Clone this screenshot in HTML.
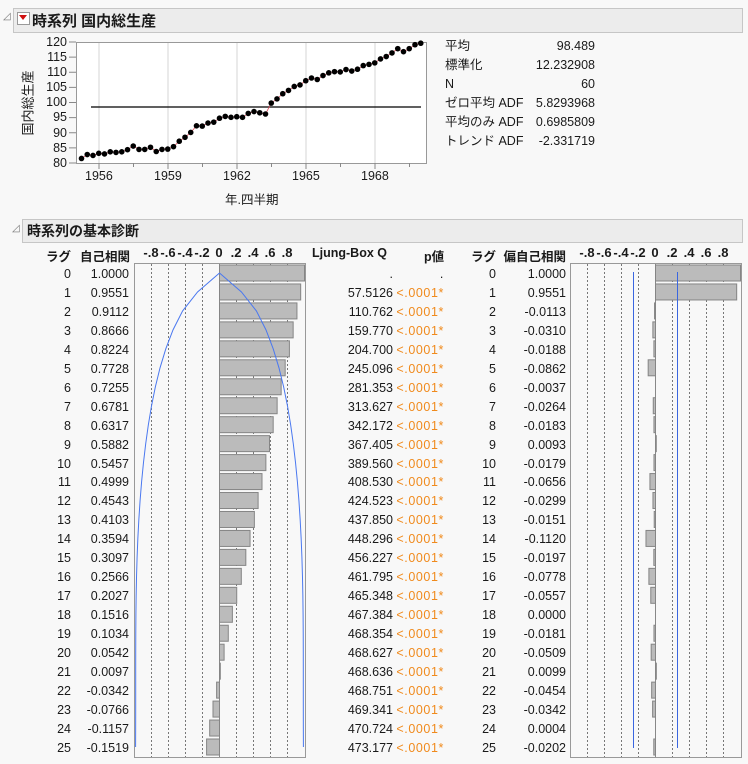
<!DOCTYPE html>
<html><head><meta charset="utf-8">
<style>
body{margin:0;width:748px;height:764px;background:#f8f8f8;font-family:"Liberation Sans","Noto Sans CJK JP",sans-serif;font-size:12.5px;color:#1a1a1a;position:relative;overflow:hidden}
.a{position:absolute;white-space:nowrap}
.r{text-align:right}
.hdr{position:absolute;background:#ececec;border:1px solid #c6c6c6;box-sizing:border-box}
.b{font-weight:bold}
.o{color:#f08a1c}
.yl{position:absolute;left:30px;width:37px;text-align:right;font-size:12.5px}
.t{position:absolute;top:245px;font-weight:bold;font-size:13px;transform:translateX(-50%)}
</style></head><body>
<div class="a" style="left:3px;top:11px;font-size:10px;color:#777">◿</div>
<div class="hdr" style="left:13px;top:8px;width:730px;height:25px"></div>
<div class="a" style="left:17px;top:12px;width:11px;height:11px;border:1px solid #999;background:#fff"></div>
<div class="a" style="left:19px;top:15px;width:0;height:0;border-left:4px solid transparent;border-right:4px solid transparent;border-top:5px solid #d01010"></div>
<div class="a b" style="left:32px;top:10px;font-size:15px">時系列 国内総生産</div>

<svg class="a" style="left:0;top:0" width="748" height="764" id="s">
<rect x="76.5" y="42.5" width="350" height="121" fill="#fff" stroke="#999"/>
</svg>

<div class="yl" style="top:35px">120</div>
<div class="yl" style="top:50px">115</div>
<div class="yl" style="top:65px">110</div>
<div class="yl" style="top:80px">105</div>
<div class="yl" style="top:95px">100</div>
<div class="yl" style="top:110px">95</div>
<div class="yl" style="top:126px">90</div>
<div class="yl" style="top:141px">85</div>
<div class="yl" style="top:156px">80</div>
<div class="a" style="top:103px;transform:translate(-50%,-50%) rotate(-90deg);left:27px;font-size:13px">国内総生産</div>
<div class="a" style="left:85px;top:169px">1956</div>
<div class="a" style="left:154px;top:169px">1959</div>
<div class="a" style="left:223px;top:169px">1962</div>
<div class="a" style="left:292px;top:169px">1965</div>
<div class="a" style="left:361px;top:169px">1968</div>
<div class="a" style="left:225px;top:189px">年.四半期</div>

<div class="a" style="left:445px;top:37px;line-height:19px">平均<br>標準化<br>N<br>ゼロ平均 ADF<br>平均のみ ADF<br>トレンド ADF</div>
<div class="a r" style="left:515px;top:37px;width:80px;line-height:19px">98.489<br>12.232908<br>60<br>5.8293968<br>0.6985809<br>-2.331719</div>

<div class="a" style="left:12px;top:223px;font-size:10px;color:#777">◿</div>
<div class="hdr" style="left:22px;top:219px;width:721px;height:24px"></div>
<div class="a b" style="left:27px;top:221px;font-size:14px">時系列の基本診断</div>

<div class="a b" style="left:0;top:246px;width:71px;text-align:right">ラグ</div>
<div class="a b" style="left:60px;top:246px;width:70px;text-align:right">自己相関</div>
<div class="t" style="left:151px">-.8</div><div class="t" style="left:168px">-.6</div><div class="t" style="left:185px">-.4</div><div class="t" style="left:202px">-.2</div><div class="t" style="left:219px">0</div><div class="t" style="left:236px">.2</div><div class="t" style="left:253px">.4</div><div class="t" style="left:270px">.6</div><div class="t" style="left:287px">.8</div>
<div class="a b" style="left:312px;top:246px">Ljung-Box Q</div>
<div class="a b" style="left:424px;top:246px">p値</div>
<div class="a b" style="left:465px;top:246px;width:31px;text-align:right">ラグ</div>
<div class="a b" style="left:496px;top:246px;width:70px;text-align:right">偏自己相関</div>
<div class="t" style="left:587px">-.8</div><div class="t" style="left:604px">-.6</div><div class="t" style="left:621px">-.4</div><div class="t" style="left:638px">-.2</div><div class="t" style="left:655px">0</div><div class="t" style="left:672px">.2</div><div class="t" style="left:689px">.4</div><div class="t" style="left:706px">.6</div><div class="t" style="left:723px">.8</div>

<div class="a r" style="left:30px;top:265px;width:41px;line-height:18.96px">0<br>1<br>2<br>3<br>4<br>5<br>6<br>7<br>8<br>9<br>10<br>11<br>12<br>13<br>14<br>15<br>16<br>17<br>18<br>19<br>20<br>21<br>22<br>23<br>24<br>25</div>
<div class="a r" style="left:70px;top:265px;width:59px;line-height:18.96px">1.0000<br>0.9551<br>0.9112<br>0.8666<br>0.8224<br>0.7728<br>0.7255<br>0.6781<br>0.6317<br>0.5882<br>0.5457<br>0.4999<br>0.4543<br>0.4103<br>0.3594<br>0.3097<br>0.2566<br>0.2027<br>0.1516<br>0.1034<br>0.0542<br>0.0097<br>-0.0342<br>-0.0766<br>-0.1157<br>-0.1519</div>
<div class="a r" style="left:315px;top:265px;width:78px;line-height:18.96px">.<br>57.5126<br>110.762<br>159.770<br>204.700<br>245.096<br>281.353<br>313.627<br>342.172<br>367.405<br>389.560<br>408.530<br>424.523<br>437.850<br>448.296<br>456.227<br>461.795<br>465.348<br>467.384<br>468.354<br>468.627<br>468.636<br>468.751<br>469.341<br>470.724<br>473.177</div>
<div class="a o r" style="left:380px;top:265px;width:64px;line-height:18.96px;letter-spacing:0.6px"><span style="color:#1a1a1a">.</span><br>&lt;.0001*<br>&lt;.0001*<br>&lt;.0001*<br>&lt;.0001*<br>&lt;.0001*<br>&lt;.0001*<br>&lt;.0001*<br>&lt;.0001*<br>&lt;.0001*<br>&lt;.0001*<br>&lt;.0001*<br>&lt;.0001*<br>&lt;.0001*<br>&lt;.0001*<br>&lt;.0001*<br>&lt;.0001*<br>&lt;.0001*<br>&lt;.0001*<br>&lt;.0001*<br>&lt;.0001*<br>&lt;.0001*<br>&lt;.0001*<br>&lt;.0001*<br>&lt;.0001*<br>&lt;.0001*</div>
<div class="a r" style="left:455px;top:265px;width:41px;line-height:18.96px">0<br>1<br>2<br>3<br>4<br>5<br>6<br>7<br>8<br>9<br>10<br>11<br>12<br>13<br>14<br>15<br>16<br>17<br>18<br>19<br>20<br>21<br>22<br>23<br>24<br>25</div>
<div class="a r" style="left:500px;top:265px;width:66px;line-height:18.96px">1.0000<br>0.9551<br>-0.0113<br>-0.0310<br>-0.0188<br>-0.0862<br>-0.0037<br>-0.0264<br>-0.0183<br>0.0093<br>-0.0179<br>-0.0656<br>-0.0299<br>-0.0151<br>-0.1120<br>-0.0197<br>-0.0778<br>-0.0557<br>0.0000<br>-0.0181<br>-0.0509<br>0.0099<br>-0.0454<br>-0.0342<br>0.0004<br>-0.0202</div>

<script>
var s=document.getElementById('s'),h='';
var d=[81.5,82.8,82.5,83.2,83,83.7,83.5,83.7,84.4,85.6,84.5,84.5,85.2,83.8,84.5,84.6,85.4,87.2,88.5,90.1,92.3,92.2,93.2,93.5,94.8,95.4,95.1,95.3,95.1,96.4,97,96.6,96.2,99.8,101.2,102.9,104,105.3,105.8,107.2,108.1,107.6,108.9,109.8,110.2,110.1,110.9,110.4,111,112.2,112.6,113.1,114.4,115.2,116.4,117.8,116.8,117.8,119.1,119.6];
function Y(v){return 163-(v-80)*121/40}
[99,168,237,306,375].forEach(function(x){h+='<line x1="'+x+'" y1="43" x2="'+x+'" y2="163" stroke="#d4d4d4"/><line x1="'+x+'" y1="163" x2="'+x+'" y2="169" stroke="#888"/>';});
[133.5,202.5,271.5,340.5,409.5].forEach(function(x){h+='<line x1="'+x+'" y1="163" x2="'+x+'" y2="167" stroke="#888"/>';});
for(var v=80;v<=120;v+=5){var y=Y(v);h+='<line x1="69" y1="'+y+'" x2="76" y2="'+y+'" stroke="#888"/>';}
h+='<line x1="91" y1="107" x2="421" y2="107" stroke="#000" stroke-width="1.3"/>';
var p='';d.forEach(function(v,i){p+=(i?'L':'M')+(81.5+i*5.75)+' '+Y(v);});
h+='<path d="'+p+'" fill="none" stroke="#e05060" stroke-width="0.8"/>';
d.forEach(function(v,i){h+='<circle cx="'+(81.5+i*5.75)+'" cy="'+Y(v)+'" r="2.8" fill="#000"/>';});
function box(x0,x1,z){var g='<rect x="'+x0+'.5" y="263.5" width="'+(x1-x0)+'" height="494" fill="#f8f8f8" stroke="#999"/>';
for(var k=-4;k<=4;k++){if(!k)continue;var x=Math.round(z+k*17)+0.5;g+='<line x1="'+x+'" y1="264" x2="'+x+'" y2="757" stroke="#777" stroke-dasharray="2,2"/>';}
g+='<line x1="'+(z+0.5)+'" y1="264" x2="'+(z+0.5)+'" y2="757" stroke="#888"/>';return g;}
var acf=[1,.9551,.9112,.8666,.8224,.7728,.7255,.6781,.6317,.5882,.5457,.4999,.4543,.4103,.3594,.3097,.2566,.2027,.1516,.1034,.0542,.0097,-.0342,-.0766,-.1157,-.1519];
var pacf=[1,.9551,-.0113,-.031,-.0188,-.0862,-.0037,-.0264,-.0183,.0093,-.0179,-.0656,-.0299,-.0151,-.112,-.0197,-.0778,-.0557,0,-.0181,-.0509,.0099,-.0454,-.0342,.0004,-.0202];
function bars(a,z){var g='';a.forEach(function(v,i){var yc=273+i*18.96,w=v*85;if(Math.abs(w)<0.5)return;var x=w>0?z:z+w;g+='<rect x="'+(x+0.5)+'" y="'+(yc-8)+'" width="'+Math.abs(w)+'" height="16" fill="#bbb" stroke="#858585" stroke-width="1"/>';});return g;}
h+=box(134,305,219)+bars(acf,219);
h+=box(570,741,655)+bars(pacf,655);
var L='',R='',sm=0;acf.forEach(function(v,i){var b=i?2*Math.sqrt((1+2*sm)/60):0;if(i)sm+=acf[i]*acf[i];b=Math.min(b,1);var y=273+i*18.96;L+=(i?'L':'M')+(219.5-b*85)+' '+y;R+=(i?'L':'M')+(219.5+b*85)+' '+y;});
h+='<path d="'+L+'" fill="none" stroke="#4a78f0" stroke-width="1"/><path d="'+R+'" fill="none" stroke="#4a78f0" stroke-width="1"/>';
h+='<line x1="633.5" y1="272" x2="633.5" y2="748" stroke="#3a66e0"/><line x1="677.5" y1="272" x2="677.5" y2="748" stroke="#3a66e0"/>';
s.innerHTML+=h;
</script>
</body></html>
